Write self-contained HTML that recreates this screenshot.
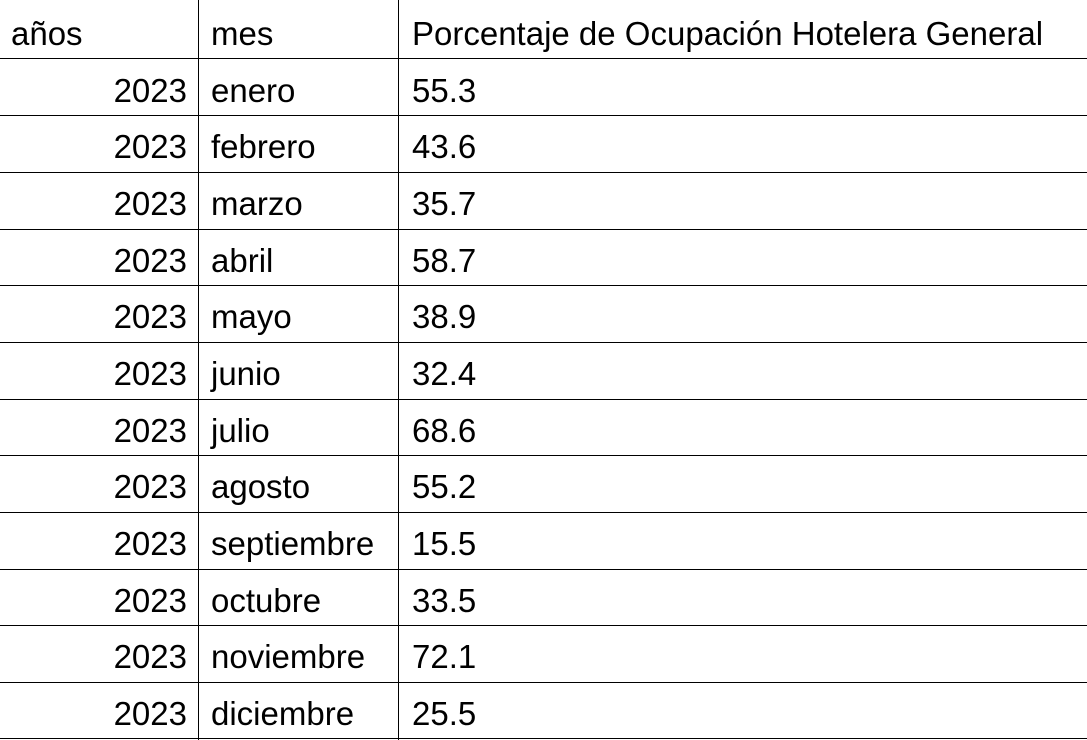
<!DOCTYPE html>
<html><head><meta charset="utf-8"><style>
html,body{margin:0;padding:0;background:#fff;width:1087px;height:740px;overflow:hidden;position:relative}
body{font-family:"Liberation Sans",Arial,sans-serif;font-size:33px;color:#000}
.h{position:absolute;left:0;width:1087px;height:1px;background:#000}
.v{position:absolute;top:0;width:1px;height:740px;background:#000}
.t{position:absolute;line-height:30px;white-space:nowrap}
.y{right:900px;text-align:right}
.m{left:211px}
.p{left:412px}
</style></head><body>
<div class="h" style="top:58px"></div>
<div class="h" style="top:115px"></div>
<div class="h" style="top:172px"></div>
<div class="h" style="top:229px"></div>
<div class="h" style="top:285px"></div>
<div class="h" style="top:342px"></div>
<div class="h" style="top:399px"></div>
<div class="h" style="top:455px"></div>
<div class="h" style="top:512px"></div>
<div class="h" style="top:569px"></div>
<div class="h" style="top:625px"></div>
<div class="h" style="top:682px"></div>
<div class="h" style="top:738px"></div>
<div class="v" style="left:198px"></div>
<div class="v" style="left:398px"></div>

<div class="t" style="left:11px;top:19px">años</div>
<div class="t m" style="top:19px">mes</div>
<div class="t p" style="top:19px">Porcentaje de Ocupación Hotelera General</div>

<div class="t y" style="top:76px">2023</div><div class="t m" style="top:76px">enero</div><div class="t p" style="top:76px">55.3</div>
<div class="t y" style="top:132px">2023</div><div class="t m" style="top:132px">febrero</div><div class="t p" style="top:132px">43.6</div>
<div class="t y" style="top:189px">2023</div><div class="t m" style="top:189px">marzo</div><div class="t p" style="top:189px">35.7</div>
<div class="t y" style="top:246px">2023</div><div class="t m" style="top:246px">abril</div><div class="t p" style="top:246px">58.7</div>
<div class="t y" style="top:302px">2023</div><div class="t m" style="top:302px">mayo</div><div class="t p" style="top:302px">38.9</div>
<div class="t y" style="top:359px">2023</div><div class="t m" style="top:359px">junio</div><div class="t p" style="top:359px">32.4</div>
<div class="t y" style="top:416px">2023</div><div class="t m" style="top:416px">julio</div><div class="t p" style="top:416px">68.6</div>
<div class="t y" style="top:472px">2023</div><div class="t m" style="top:472px">agosto</div><div class="t p" style="top:472px">55.2</div>
<div class="t y" style="top:529px">2023</div><div class="t m" style="top:529px">septiembre</div><div class="t p" style="top:529px">15.5</div>
<div class="t y" style="top:586px">2023</div><div class="t m" style="top:586px">octubre</div><div class="t p" style="top:586px">33.5</div>
<div class="t y" style="top:642px">2023</div><div class="t m" style="top:642px">noviembre</div><div class="t p" style="top:642px">72.1</div>
<div class="t y" style="top:699px">2023</div><div class="t m" style="top:699px">diciembre</div><div class="t p" style="top:699px">25.5</div>
</body></html>
